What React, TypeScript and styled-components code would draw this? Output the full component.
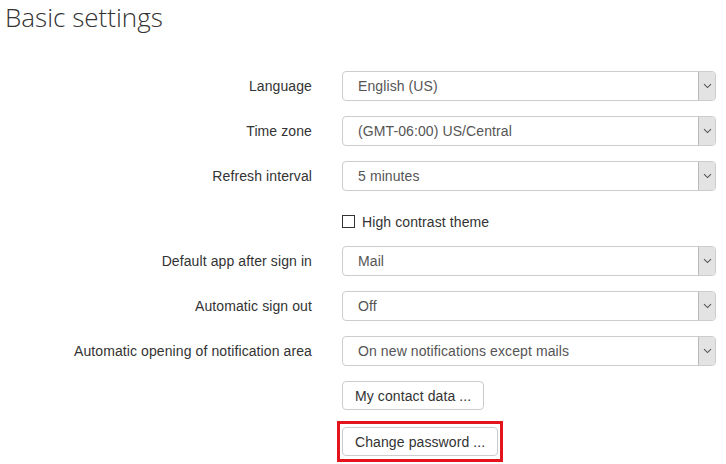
import React from "react";
import styled, { createGlobalStyle } from "styled-components";

const GlobalStyle = createGlobalStyle`
  html, body { margin: 0; padding: 0; background: #ffffff; }
  body { font-family: "Liberation Sans", Arial, sans-serif; color: #333333; }
  * { box-sizing: border-box; }
`;

const Page = styled.div`
  width: 726px;
  height: 464px;
  overflow: hidden;
  padding: 0 10px 0 0;
`;

const Title = styled.h1`
  margin: 0;
  padding: 0 0 0 5px;
  font-family: "Open Sans", sans-serif;
  font-weight: 300;
  font-size: 26px;
  line-height: 34px;
  color: #333333;
`;

const Form = styled.form`
  display: grid;
  grid-template-columns: 312px 374px;
  column-gap: 30px;
  row-gap: 15px;
  margin-top: 37px;
`;

const Label = styled.label`
  display: flex;
  align-items: center;
  justify-content: flex-end;
  font-size: 14px;
  letter-spacing: 0.1px;
  color: #333333;
  height: 30px;
  white-space: nowrap;
`;

const Spacer = styled.div``;

const SelectBox = styled.div`
  display: flex;
  height: 30px;
  border: 1px solid #cccccc;
  border-radius: 4px;
  overflow: hidden;
  background: #ffffff;
`;

const NativeSelect = styled.select`
  flex: 1;
  appearance: none;
  -webkit-appearance: none;
  border: none;
  outline: none;
  background: transparent;
  font-family: "Liberation Sans", Arial, sans-serif;
  font-size: 14px;
  letter-spacing: 0.1px;
  color: #555555;
  padding: 0 0 0 15px;
  margin: 0;
  height: 100%;
`;

const ArrowBox = styled.span`
  width: 17px;
  display: flex;
  align-items: center;
  justify-content: center;
  background: #e3e3e3;
  border-left: 1px solid #b9b9b9;
`;

const CheckRow = styled.label`
  display: flex;
  align-items: center;
  gap: 7px;
  height: 25px;
  padding-top: 6px;
  font-size: 14px;
  letter-spacing: 0.1px;
  color: #333333;
`;

const CheckSquare = styled.span`
  width: 13px;
  height: 13px;
  border: 1px solid #333333;
  background: #ffffff;
  display: inline-block;
`;

const ButtonCell = styled.div<{ $gapTop?: number }>`
  display: flex;
  align-items: center;
  margin-top: ${(p) => p.$gapTop ?? 0}px;
`;

const Highlight = styled.span`
  display: inline-flex;
  border: 3px solid #e3141b;
  padding: 3px 2px 3px 2px;
  margin: -6px 0 -6px -5px;
`;

const Button = styled.button`
  height: 29px;
  padding: 0 12px;
  border: 1px solid #cccccc;
  border-radius: 4px;
  background: #ffffff;
  font-family: "Liberation Sans", Arial, sans-serif;
  font-size: 14px;
  letter-spacing: 0.1px;
  color: #333333;
  cursor: pointer;
`;

const Chevron = () => (
  <svg width="9" height="6" viewBox="0 0 9 6" aria-hidden>
    <path d="M1 1.2 L4.5 4.6 L8 1.2" fill="none" stroke="#555" strokeWidth="1.1" />
  </svg>
);

const Select = ({ value }: { value: string }) => (
  <SelectBox>
    <NativeSelect defaultValue={value}>
      <option>{value}</option>
    </NativeSelect>
    <ArrowBox>
      <Chevron />
    </ArrowBox>
  </SelectBox>
);

const rowsA = [
  { label: "Language", value: "English (US)" },
  { label: "Time zone", value: "(GMT-06:00) US/Central" },
  { label: "Refresh interval", value: "5 minutes" },
];

const rowsB = [
  { label: "Default app after sign in", value: "Mail" },
  { label: "Automatic sign out", value: "Off" },
  { label: "Automatic opening of notification area", value: "On new notifications except mails" },
];

export default function App() {
  return (
    <>
      <GlobalStyle />
      <Page>
        <Title>Basic settings</Title>
        <Form onSubmit={(e) => e.preventDefault()}>
          {rowsA.map((r) => (
            <React.Fragment key={r.label}>
              <Label>{r.label}</Label>
              <Select value={r.value} />
            </React.Fragment>
          ))}
          <Spacer />
          <CheckRow>
            <CheckSquare />
            High contrast theme
          </CheckRow>
          {rowsB.map((r) => (
            <React.Fragment key={r.label}>
              <Label>{r.label}</Label>
              <Select value={r.value} />
            </React.Fragment>
          ))}
          <Spacer />
          <ButtonCell>
            <Button type="button">My contact data ...</Button>
          </ButtonCell>
          <Spacer />
          <ButtonCell $gapTop={2}>
            <Highlight>
              <Button type="button">Change password ...</Button>
            </Highlight>
          </ButtonCell>
        </Form>
      </Page>
    </>
  );
}
